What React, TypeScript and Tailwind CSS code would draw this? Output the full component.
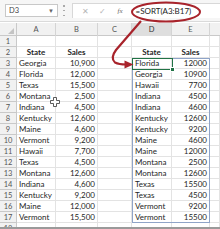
import React from "react";

const data: [string, string, string, string][] = [
  ["Georgia", "10,900", "Florida", "12000"],
  ["Florida", "12,000", "Georgia", "10900"],
  ["Texas", "15,500", "Hawaii", "7700"],
  ["Montana", "2,500", "Indiana", "4500"],
  ["Indiana", "4,500", "Indiana", "4600"],
  ["Kentucky", "12,600", "Kentucky", "12600"],
  ["Maine", "4,600", "Kentucky", "9200"],
  ["Vermont", "9,200", "Maine", "4600"],
  ["Hawaii", "7,700", "Maine", "12000"],
  ["Texas", "4,500", "Montana", "2500"],
  ["Montana", "12,600", "Montana", "12600"],
  ["Indiana", "4,600", "Texas", "15500"],
  ["Kentucky", "9,200", "Texas", "4500"],
  ["Maine", "12,000", "Vermont", "9200"],
  ["Vermont", "15,500", "Vermont", "15500"],
];

const cols = "grid grid-cols-[17px_39px_42px_34px_40px_38px_1fr]";
const cell = "h-[11px] border-b border-r border-[#e3e3e3] leading-[11px] text-[8px] text-[#262626] overflow-hidden whitespace-nowrap";
const rowHead = "h-[11px] border-b border-r border-[#c9c9c9] bg-[#f1f1f1] text-[7.5px] leading-[11px] text-[#555] text-center";

export default function App() {
  return (
    <div className="relative h-[229px] w-[220px] overflow-hidden bg-white font-['Lato','Liberation_Sans',sans-serif] border-b-2 border-[#9a9a9a]">
      {/* formula bar */}
      <div className="flex h-[22px] items-center bg-[#f6f6f6] border-b border-[#dadada]">
        <div className="ml-[5px] flex h-[13px] w-[53px] items-center justify-between border border-[#c8c8c8] bg-white px-[3px] text-[7.5px] text-[#444]">
          <span>D3</span>
          <span className="text-[6px] text-[#666]">▼</span>
        </div>
        <div className="ml-[5px] flex h-[11px] flex-col justify-between">
          <span className="h-[1.5px] w-[1.5px] bg-[#aaa]" />
          <span className="h-[1.5px] w-[1.5px] bg-[#aaa]" />
          <span className="h-[1.5px] w-[1.5px] bg-[#aaa]" />
        </div>
        <div className="ml-[7px] flex h-[15px] flex-1 items-center bg-white border-l border-t border-[#d8d8d8]">
          <span className="ml-[9px] w-[6px] text-[8px] text-[#b5b5b5]">✕</span>
          <span className="ml-[11px] w-[6px] text-[8px] text-[#b5b5b5]">✓</span>
          <span className="ml-[13px] w-[6px] text-[7px] italic text-[#666] font-['Liberation_Serif',serif]">fx</span>
          <span className="ml-[12px] text-[8px] text-[#222]">=SORT(A3:B17)</span>
        </div>
      </div>
      <div className="h-[1px]" />
      {/* column header */}
      <div className={`${cols} h-[13px] border-b border-[#c9c9c9] bg-[#f1f1f1] text-[7.5px] text-[#555]`}>
        <div className="relative border-r border-[#c9c9c9]">
          <svg className="absolute bottom-[2px] right-[2px]" width="6" height="6" viewBox="0 0 6 6">
            <polygon points="6,0 6,6 0,6" fill="#c4c4c4" />
          </svg>
        </div>
        <div className="border-r border-[#d4d4d4] text-center leading-[13px]">A</div>
        <div className="border-r border-[#d4d4d4] text-center leading-[13px]">B</div>
        <div className="border-r border-[#d4d4d4] text-center leading-[13px]">C</div>
        <div className="border-r border-[#d4d4d4] bg-[#dedede] text-center leading-[13px] text-[#333]">D</div>
        <div className="border-r border-[#d4d4d4] text-center leading-[13px]">E</div>
        <div />
      </div>
      {/* row 1 */}
      <div className={cols}>
        <div className={rowHead}>1</div>
        <div className={cell} /><div className={cell} /><div className={cell} /><div className={cell} /><div className={cell} /><div className={cell} />
      </div>
      {/* row 2 */}
      <div className={cols}>
        <div className={rowHead}>2</div>
        <div className={`${cell} text-center font-bold`}>State</div>
        <div className={`${cell} text-center font-bold`}>Sales</div>
        <div className={cell} />
        <div className={`${cell} text-center font-bold`}>State</div>
        <div className={`${cell} text-center font-bold`}>Sales</div>
        <div className={cell} />
      </div>
      {data.map((r, i) => (
        <div key={i} className={cols}>
          <div className={`${rowHead} ${i === 0 ? "bg-[#dcdcdc] text-[#333]" : ""}`}>{i + 3}</div>
          <div className={`${cell} pl-[2px]`}>{r[0]}</div>
          <div className={`${cell} pr-[2px] text-right`}>{r[1]}</div>
          <div className={cell} />
          <div className={`${cell} pl-[3px]`}>{r[2]}</div>
          <div className={`${cell} pr-[2px] text-right`}>{r[3]}</div>
          <div className={cell} />
        </div>
      ))}
      <div className={cols}>
        <div className={`${rowHead} leading-[9px]`}>18</div>
        <div className={cell} /><div className={cell} /><div className={cell} /><div className={cell} /><div className={cell} /><div className={cell} />
      </div>

      {/* spill range border */}
      <div className="absolute left-[132px] top-[58px] h-[165px] w-[78px] border border-[#8fa4c8]" />
      {/* active cell */}
      <div className="absolute left-[132px] top-[58px] h-[11.5px] w-[40.5px] border-[1.5px] border-[#217346]" />
      <div className="absolute left-[170.5px] top-[67.5px] h-[3px] w-[3px] bg-[#217346] outline outline-1 outline-white" />

      {/* cursor */}
      <svg className="absolute left-[50px] top-[97px]" width="10" height="10" viewBox="0 0 10 10">
        <path d="M3.5 0.5h3v3h3v3h-3v3h-3v-3h-3v-3h3z" fill="white" stroke="#333" strokeWidth="0.8" />
      </svg>

      {/* annotation */}
      <svg className="pointer-events-none absolute left-0 top-0" width="220" height="229" viewBox="0 0 220 229">
        <ellipse cx="166" cy="12" rx="34" ry="9.5" fill="none" stroke="#a8232b" strokeWidth="2" />
        <path d="M141 21 L116 50 Q110 58 115 62.5 Q119 64.5 126 64.5" fill="none" stroke="#a8232b" strokeWidth="2.2" />
        <polygon points="124.5,60.5 133.5,64.5 124.5,68.5" fill="#a8232b" />
      </svg>
    </div>
  );
}
